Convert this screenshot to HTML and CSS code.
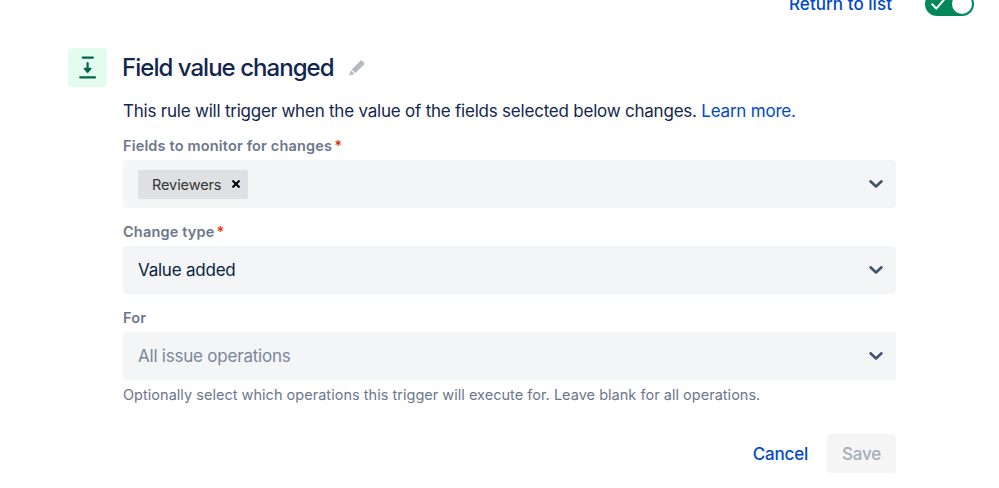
FILE: index.html
```
<!DOCTYPE html>
<html lang="en">
<head>
<meta charset="UTF-8" />
<meta name="viewport" content="width=device-width, initial-scale=1.0" />
<title>Field value changed</title>
<link rel="stylesheet" href="styles.css">
</head>
<body>

<!-- top bar -->
<div class="topbar">
  <a class="return-link">Return to list</a>
  <div class="toggle">
    <svg width="18" height="16" viewBox="0 0 18 16"><path d="M2.2 8.2 L6.3 12.6 L14.8 2.8" /></svg>
    <span class="knob"></span>
  </div>
</div>

<div class="rule">
  <div class="rule-header">
    <div class="rule-icon">
      <svg width="39" height="39" viewBox="0 0 39 39">
        <path d="M14.8 9.7H24.8M12.2 29.3H27M19.6 15V22" />
        <path class="head" d="M16.4 20.5H22.8L19.6 24.3Z" />
      </svg>
    </div>
    <h2 class="rule-title">Field value changed</h2>
    <svg class="edit" width="18" height="18" viewBox="0 0 18 18">
      <path d="M12.4 1.7a1.2 1.2 0 0 1 1.7 0l2 2a1.2 1.2 0 0 1 0 1.7L7.4 14.1 3.7 10.4Z" />
      <path d="M2.9 11.2 6.6 14.9 1.9 16.2a.6.6 0 0 1-.7-.7Z" />
    </svg>
  </div>

  <form class="rule-form">
    <p class="desc">This rule will trigger when the value of the fields selected below changes. <a class="learn">Learn more.</a></p>

    <label class="label">Fields to monitor for changes<span class="req">*</span></label>
    <div class="select">
      <span class="tag"><span class="tag-text">Reviewers</span><svg width="8" height="8" viewBox="0 0 8 8"><path d="M.5 .5 7.5 7.5M7.5 .5 .5 7.5" /></svg></span>
      <svg class="chevron" width="16" height="10" viewBox="0 0 16 10"><path d="M2.5 2.3 8 7.5 13.5 2.3" /></svg>
    </div>

    <label class="label">Change type<span class="req">*</span></label>
    <div class="select">
      <span class="value">Value added</span>
      <svg class="chevron" width="16" height="10" viewBox="0 0 16 10"><path d="M2.5 2.3 8 7.5 13.5 2.3" /></svg>
    </div>

    <label class="label">For</label>
    <div class="select">
      <span class="placeholder">All issue operations</span>
      <svg class="chevron" width="16" height="10" viewBox="0 0 16 10"><path d="M2.5 2.3 8 7.5 13.5 2.3" /></svg>
    </div>
    <p class="help">Optionally select which operations this trigger will execute for. Leave blank for all operations.</p>

    <div class="actions">
      <button type="button" class="btn cancel">Cancel</button>
      <button type="button" class="btn save" disabled>Save</button>
    </div>
  </form>
</div>

</body>
</html>
```
FILE: styles.css
```
:root{
  --text:    #122650;
  --subtle:  #6B778C;
  --link:    #0049CC;
  --field:   #F4F5F7;
  --green:   #00875A;
  --red:     #DE350B;
  font-family: Inter, "Liberation Sans", Arial, sans-serif;
}

*{box-sizing:border-box;margin:0;padding:0}

body{
  height:488px;
  background:#fff;
  color:var(--text);
  overflow:hidden;
}

svg{display:block;flex:none;fill:none}

/* top bar, scrolled partly out of view */
.topbar{
  display:flex;
  justify-content:flex-end;
  align-items:center;
  height:24px;
  margin-top:-8px;
  padding-right:25px;
}
.return-link{
  color:var(--link);
  font-size:17px;
  font-weight:500;
  line-height:24px;
  letter-spacing:.05px;
  margin-right:33px;
}
.toggle{
  width:49px;height:24px;
  border-radius:12px;
  background:var(--green);
  display:flex;
  align-items:center;
  justify-content:space-between;
  padding:0 2px 0 5px;
}
.toggle path{stroke:#fff;stroke-width:2;stroke-linecap:round;stroke-linejoin:round}
.knob{width:20px;height:20px;border-radius:50%;background:#fff}

/* rule */
.rule{padding:32px 103px 0 68px}
.rule-header{display:flex;align-items:center;height:39px}
.rule-icon{
  width:39px;height:39px;
  border-radius:4px;
  background:#E3FCEF;
}
.rule-icon path{stroke:#006644;stroke-width:2.2;stroke-linecap:round;stroke-linejoin:round}
.rule-icon .head{fill:#006644;stroke-width:1.5}
.rule-title{
  margin-left:15px;
  font-size:24px;
  font-weight:550;
  line-height:32px;
  letter-spacing:-.97px;
  white-space:nowrap;
}
.edit{margin-left:14px;fill:#B3BAC5}

.rule-form{margin-left:55px}
.desc{
  margin-top:12px;
  font-size:17px;
  line-height:24px;
  letter-spacing:-.22px;
  white-space:nowrap;
}
.learn{color:var(--link)}

.label{
  display:block;
  height:20px;
  margin:14px 0 4px;
  color:var(--subtle);
  font-size:14.5px;
  font-weight:600;
  line-height:20px;
  letter-spacing:.17px;
}
.desc + .label{margin-top:13px}
.req{color:var(--red);margin-left:2px}

.select{
  display:flex;
  align-items:center;
  justify-content:space-between;
  height:48px;
  padding:0 12px 0 15px;
  border-radius:4px;
  background:var(--field);
  font-size:17px;
  letter-spacing:-.22px;
}
.value{color:#091E42}
.placeholder{color:#7A869A}
.chevron path{stroke:#42526E;stroke-width:2.6;stroke-linecap:round;stroke-linejoin:round}

.tag{
  display:flex;
  align-items:center;
  justify-content:space-between;
  width:110px;height:29px;
  padding:0 8px 0 14px;
  border-radius:2px;
  background:#DFE0E3;
  color:#333;
  font-size:14.5px;
  letter-spacing:-.1px;
}
.tag path{stroke:#000;stroke-width:2}

.help{
  margin-top:5px;
  color:var(--subtle);
  font-size:14.5px;
  line-height:20px;
  letter-spacing:.025px;
  white-space:nowrap;
}

/* form buttons */
.actions{display:flex;justify-content:flex-end;margin-top:29px}
.btn{
  height:39px;
  border:none;
  border-radius:4px;
  background:none;
  font-family:inherit;
  font-size:17px;
  font-weight:500;
  letter-spacing:-.2px;
}
.cancel{color:var(--link);margin-right:19px}
.save{width:69px;background:#F5F5F5;color:#A5ADBA}
```
